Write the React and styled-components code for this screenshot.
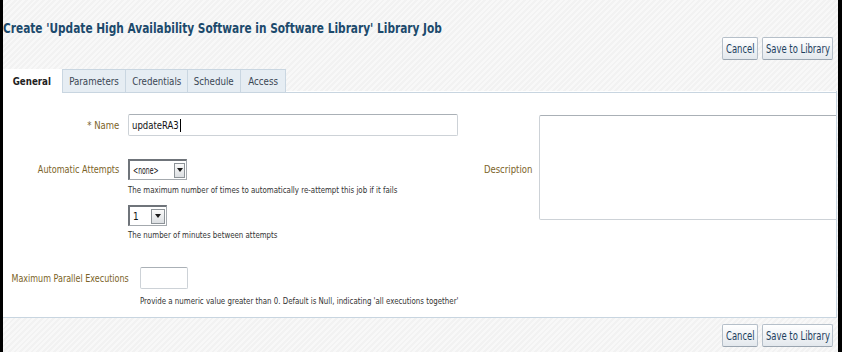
import React from "react";
import styled, { createGlobalStyle } from "styled-components";

const Global = createGlobalStyle`
  html, body { margin: 0; padding: 0; background: #fff; }
  body { font-family: "DejaVu Sans Condensed", "DejaVu Sans", sans-serif; }
  * { box-sizing: border-box; }
`;

const Page = styled.div`
  width: 842px;
  height: 352px;
  display: flex;
  flex-direction: column;
  border-left: 3px solid #000;
  border-right: 4px solid #000;
  background: repeating-linear-gradient(135deg, #f2f2f2 0px, #f2f2f2 2px, #f8f8f8 2px, #f8f8f8 4px);
  overflow: hidden;
`;

const Squeeze = styled.span`
  display: inline-block;
  white-space: nowrap;
  flex-shrink: 0;
  transform: scaleX(${(p) => p.$s});
  transform-origin: ${(p) => p.$o || "left"} center;
`;

const Title = styled.h1`
  margin: 0;
  padding: 20px 0 0 0;
  height: 36px;
  font-size: 14px;
  line-height: 16px;
  font-weight: bold;
  color: #1c4a6c;
  white-space: nowrap;
`;

const ButtonBar = styled.div`
  display: flex;
  justify-content: flex-end;
  gap: 4px;
  padding-right: 5px;
  margin-top: ${(p) => p.$mt}px;
`;

const Button = styled.button`
  width: ${(p) => p.$w}px;
  height: 23px;
  padding: 0;
  display: flex;
  align-items: center;
  justify-content: center;
  font-family: inherit;
  font-size: 12px;
  color: #1d3f5e;
  background: linear-gradient(#ffffff, #e3e8ed);
  border: 1px solid #b5bfc9;
  border-bottom-color: #9aa5b0;
  border-radius: 2px;
`;

const Tabs = styled.div`
  display: flex;
  margin-top: 9px;
  height: 24px;
`;

const Tab = styled.div`
  width: ${(p) => p.$w}px;
  display: flex;
  align-items: center;
  justify-content: center;
  font-size: 10.5px;
  color: ${(p) => (p.$active ? "#222" : "#3a4653")};
  font-weight: ${(p) => (p.$active ? "bold" : "normal")};
  background: ${(p) => (p.$active ? "#fff" : "#e6edf3")};
  border-top: 1px solid ${(p) => (p.$active ? "#fff" : "#c9d6e1")};
  border-right: 1px solid ${(p) => (p.$active ? "#fff" : "#c9d6e1")};
  border-bottom: 1px solid ${(p) => (p.$active ? "#fff" : "#c8d5e0")};
  border-left: ${(p) => (p.$first ? "1px solid #c9d6e1" : "none")};
`;

const TabFiller = styled.div`
  flex: 1;
  margin-right: 1px;
  border-bottom: 1px solid #c8d5e0;
  border-right: 1px solid #c8d5e0;
  margin-top: 22px;
  background: #fff;
`;

const Panel = styled.div`
  height: 225px;
  margin-right: 1px;
  background: #fff;
  border-right: 1px solid #c8d5e0;
  border-bottom: 1px solid #c8d5e0;
  display: flex;
  overflow: hidden;
`;

const LeftCol = styled.div`
  width: 470px;
  flex-shrink: 0;
  display: flex;
  flex-direction: column;
  padding-top: 21px;
`;

const RightCol = styled.div`
  display: flex;
  align-items: center;
  gap: 7px;
  padding-top: 22px;
  height: 130px;
`;

const Row = styled.div`
  display: flex;
  gap: ${(p) => p.$gap}px;
  margin-top: ${(p) => p.$mt || 0}px;
`;

const Label = styled.div`
  width: ${(p) => p.$w}px;
  display: flex;
  justify-content: flex-end;
  align-items: center;
  flex-shrink: 0;
  font-size: 11px;
  color: #7b6327;
  height: ${(p) => p.$h || 22}px;
  white-space: nowrap;
`;

const Field = styled.div`
  display: flex;
  flex-direction: column;
  align-items: flex-start;
`;

const TextInput = styled.div`
  width: ${(p) => p.$w}px;
  height: 22px;
  border: 1px solid #cdd2d7;
  border-top-color: #aab0b6;
  border-radius: 2px;
  font-size: 11px;
  color: #111;
  padding: 0 3px;
  display: flex;
  align-items: center;
  background: #fff;
`;

const Caret = styled.span`
  display: inline-block;
  width: 1px;
  height: 13px;
  background: #000;
  margin-left: -6px;
`;

const Select = styled.div`
  display: flex;
  align-items: center;
  height: 21px;
  width: ${(p) => p.$w}px;
  border: 1px solid #a4a9ae;
  border-top: 2px solid #6f747a;
  border-left: 2px solid #6f747a;
  background: #fff;
  padding-right: 1px;
  margin-top: ${(p) => p.$mt || 0}px;
`;

const SelectValue = styled.div`
  flex: 1;
  font-size: 11px;
  color: #111;
  padding-left: 3px;
`;

const SelectArrow = styled.div`
  width: 14px;
  height: 15px;
  border: 1px solid #8d9398;
  background: linear-gradient(#fafafa, #dcdfe2);
  display: flex;
  align-items: center;
  justify-content: center;
  &::after {
    content: "";
    border-left: 3.5px solid transparent;
    border-right: 3.5px solid transparent;
    border-top: 4px solid #1a1a1a;
  }
`;

const Hint = styled.div`
  font-size: 9px;
  line-height: 11px;
  color: #333;
  margin-top: ${(p) => p.$mt}px;
  white-space: nowrap;
`;

const TextArea = styled.div`
  width: 320px;
  height: 105px;
  flex-shrink: 0;
  border: 1px solid #cdd2d7;
  border-top-color: #aab0b6;
  border-radius: 2px;
  background: #fff;
  align-self: flex-start;
`;

const tabs = [
  { name: "General", w: 59, active: true },
  { name: "Parameters", w: 64 },
  { name: "Credentials", w: 62 },
  { name: "Schedule", w: 53 },
  { name: "Access", w: 45 },
];

function Buttons({ mt }) {
  return (
    <ButtonBar $mt={mt}>
      <Button $w={36}><Squeeze $s={0.78} $o="center">Cancel</Squeeze></Button>
      <Button $w={71}><Squeeze $s={0.78} $o="center">Save to Library</Squeeze></Button>
    </ButtonBar>
  );
}

export default function App() {
  return (
    <>
      <Global />
      <Page>
        <Title>
          <Squeeze $s={0.84}>Create 'Update High Availability Software in Software Library' Library Job</Squeeze>
        </Title>
        <Buttons mt={1} />
        <Tabs>
          {tabs.map((t, i) => (
            <Tab key={t.name} $w={t.w} $active={t.active} $first={i === 1}>
              <Squeeze $s={0.92} $o="center">{t.name}</Squeeze>
            </Tab>
          ))}
          <TabFiller />
        </Tabs>
        <Panel>
          <LeftCol>
            <Row $gap={9}>
              <Label $w={116}><Squeeze $s={0.86} $o="right">* Name</Squeeze></Label>
              <Field>
                <TextInput $w={330}>
                  <Squeeze $s={0.86}>updateRA3</Squeeze>
                  <Caret />
                </TextInput>
              </Field>
            </Row>
            <Row $gap={9} $mt={23}>
              <Label $w={116} $h={21}><Squeeze $s={0.82} $o="right">Automatic Attempts</Squeeze></Label>
              <Field>
                <Select $w={59}>
                  <SelectValue><Squeeze $s={0.62}>&lt;none&gt;</Squeeze></SelectValue>
                  <SelectArrow />
                </Select>
                <Hint $mt={5}><Squeeze $s={0.87}>The maximum number of times to automatically re-attempt this job if it fails</Squeeze></Hint>
                <Select $w={39} $mt={9}>
                  <SelectValue><Squeeze $s={0.9}>1</Squeeze></SelectValue>
                  <SelectArrow />
                </Select>
                <Hint $mt={4}><Squeeze $s={0.87}>The number of minutes between attempts</Squeeze></Hint>
              </Field>
            </Row>
            <Row $gap={11} $mt={26}>
              <Label $w={126}><Squeeze $s={0.81} $o="right">Maximum Parallel Executions</Squeeze></Label>
              <Field>
                <TextInput $w={48} />
                <Hint $mt={7}><Squeeze $s={0.87}>Provide a numeric value greater than 0. Default is Null, indicating 'all executions together'</Squeeze></Hint>
              </Field>
            </Row>
          </LeftCol>
          <RightCol>
            <Label $w={59}><Squeeze $s={0.86} $o="right">Description</Squeeze></Label>
            <TextArea />
          </RightCol>
        </Panel>
        <Buttons mt={6} />
      </Page>
    </>
  );
}
